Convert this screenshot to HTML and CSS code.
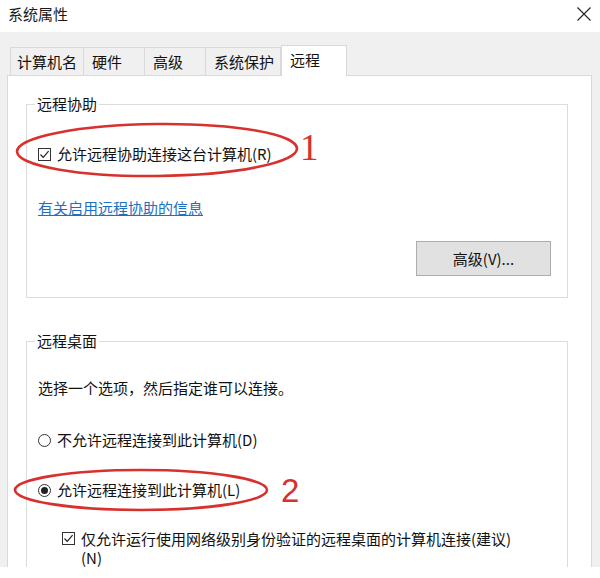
FILE: index.html
```html
<!DOCTYPE html>
<html lang="zh-CN">
<head>
    <meta charset="UTF-8">
    <meta name="viewport" content="width=device-width, initial-scale=1.0">
    <title>系统属性</title>
    <link rel="stylesheet" href="styles.css">
</head>
<body>
    <div class="titlebar">
        <span class="title">系统属性</span>
        <svg class="close" width="14" height="14" viewBox="0 0 14 14">
            <path d="M0.5 0.5L13.5 13.5M13.5 0.5L0.5 13.5" />
        </svg>
    </div>

    <div class="dialog">
        <div class="tabs">
            <div class="tab">计算机名</div>
            <div class="tab">硬件</div>
            <div class="tab">高级</div>
            <div class="tab">系统保护</div>
            <div class="tab active">远程</div>
        </div>

        <div class="panel">
            <fieldset class="group group-assist">
                <legend>远程协助</legend>
                <label class="row check-row">
                    <span class="box">
                        <svg width="11" height="11" viewBox="0 0 11 11"><path d="M1.5 5.5L4.2 8.3L9.6 2.2" /></svg>
                    </span>
                    允许远程协助连接这台计算机(R)
                </label>
                <a class="link" href="#">有关启用远程协助的信息</a>
                <div class="btn-row">
                    <button class="btn">高级(V)...</button>
                </div>
            </fieldset>

            <fieldset class="group group-desktop">
                <legend>远程桌面</legend>
                <p class="hint">选择一个选项，然后指定谁可以连接。</p>
                <label class="row radio-row first">
                    <span class="radio"></span>
                    不允许远程连接到此计算机(D)
                </label>
                <label class="row radio-row second">
                    <span class="radio on"></span>
                    允许远程连接到此计算机(L)
                </label>
                <label class="row check-row sub">
                    <span class="box">
                        <svg width="11" height="11" viewBox="0 0 11 11"><path d="M1.5 5.5L4.2 8.3L9.6 2.2" /></svg>
                    </span>
                    <span class="wrap">仅允许运行使用网络级别身份验证的远程桌面的计算机连接(建议)(N)</span>
                </label>
            </fieldset>
        </div>
    </div>

    <!-- red hand marks drawn over the screenshot -->
    <svg class="marks" width="600" height="578" viewBox="0 0 600 578">
        <ellipse cx="157" cy="150" rx="140" ry="26" transform="rotate(-0.6 157 150)" />
        <ellipse cx="141" cy="490" rx="126" ry="20" />
    </svg>
    <span class="num num-1">1</span>
    <span class="num num-2">2</span>
</body>
</html>
```

FILE: styles.css
```css
body {
    margin: 0;
    width: 600px;
    height: 578px;
    background: #ffffff;
    font-family: "Noto Sans CJK SC", "Noto Sans", sans-serif;
    font-size: 15px;
    color: #111;
    position: relative;
    overflow: hidden;
}
.titlebar {
    height: 32px;
    display: flex;
    justify-content: space-between;
    align-items: flex-start;
    padding-left: 8px;
}
.title {
    margin-top: 4px;
    line-height: 20px;
    color: #1a1a1a;
}
.close {
    margin: 7px 9px 0 0;
}
.close path {
    stroke: #222;
    stroke-width: 1.1;
    fill: none;
}
.dialog {
    height: 535px;
    background: #f0f0f0;
    padding: 13px 8px 0 7px;
    box-sizing: border-box;
    display: flex;
    flex-direction: column;
    overflow: hidden;
}
.tabs {
    display: flex;
    align-items: flex-end;
    height: 30px;
    padding-left: 3px;
}
.tab {
    height: 28px;
    line-height: 27px;
    padding: 0 6px 0 6px;
    min-width: 61px;
    box-sizing: border-box;
    border: 1px solid #d9d9d9;
    border-bottom: none;
    border-left: none;
    background: #f0f0f0;
}
.tab:first-child {
    border-left: 1px solid #d9d9d9;
}
.tab:nth-child(2),
.tab:nth-child(3) {
    padding-left: 8px;
}
.tab:nth-child(4) {
    padding-left: 8px;
}
.tab.active {
    height: 31px;
    line-height: 28px;
    min-width: 66px;
    padding-left: 8px;
    margin-bottom: -1px;
    background: #ffffff;
    border-left: 1px solid #d9d9d9;
    position: relative;
    z-index: 1;
}
.panel {
    flex: 1;
    background: #ffffff;
    border: 1px solid #d9d9d9;
    padding: 18px 23px 0 18px;
}
.group {
    margin: 0;
    min-width: 0;
    border: 1px solid #dcdcdc;
    padding: 0 16px 21px 11px;
}
.group legend {
    line-height: 20px;
    padding: 0 2px;
    margin-left: -3px;
}
.group-desktop {
    margin-top: 33px;
}
.row {
    display: flex;
    align-items: center;
    line-height: 20px;
}
.check-row {
    margin-top: 30px;
}
.box {
    width: 13px;
    height: 13px;
    border: 1px solid #333;
    box-sizing: border-box;
    margin-right: 6px;
    display: flex;
    align-items: center;
    justify-content: center;
    flex-shrink: 0;
}
.box svg path {
    stroke: #222;
    stroke-width: 1.2;
    fill: none;
}
.link {
    display: block;
    width: fit-content;
    margin-top: 34px;
    line-height: 20px;
    color: #1e6fc2;
    text-decoration: underline;
}
.btn-row {
    display: flex;
    justify-content: flex-end;
    margin-top: 23px;
}
.btn {
    width: 135px;
    height: 35px;
    background: #e1e1e1;
    border: 1px solid #adadad;
    font-family: inherit;
    font-size: 15px;
    color: #111;
    padding: 0;
}
.hint {
    margin: 27px 0 0;
    line-height: 20px;
}
.radio-row.first {
    margin-top: 32px;
}
.radio-row.second {
    margin-top: 30px;
}
.radio {
    width: 13px;
    height: 13px;
    border: 1px solid #333;
    border-radius: 50%;
    box-sizing: border-box;
    margin-right: 6px;
    display: flex;
    align-items: center;
    justify-content: center;
}
.radio.on::after {
    content: "";
    width: 7px;
    height: 7px;
    border-radius: 50%;
    background: #222;
}
.check-row.sub {
    margin-top: 29px;
    margin-left: 24px;
    align-items: flex-start;
    line-height: 19px;
}
.check-row.sub .box {
    margin-top: 3px;
}
.wrap {
    width: 440px;
}
.marks {
    position: absolute;
    top: 0;
    left: 0;
    pointer-events: none;
}
.marks ellipse {
    fill: none;
    stroke: #d8302d;
    stroke-width: 2.6;
}
.num {
    position: absolute;
    color: #d8302d;
    line-height: 1;
}
.num-1 {
    left: 300px;
    top: 129px;
    font-family: "Liberation Serif", serif;
    font-size: 37px;
}
.num-2 {
    left: 281px;
    top: 474px;
    font-family: "Liberation Sans", sans-serif;
    font-size: 33px;
}
```
